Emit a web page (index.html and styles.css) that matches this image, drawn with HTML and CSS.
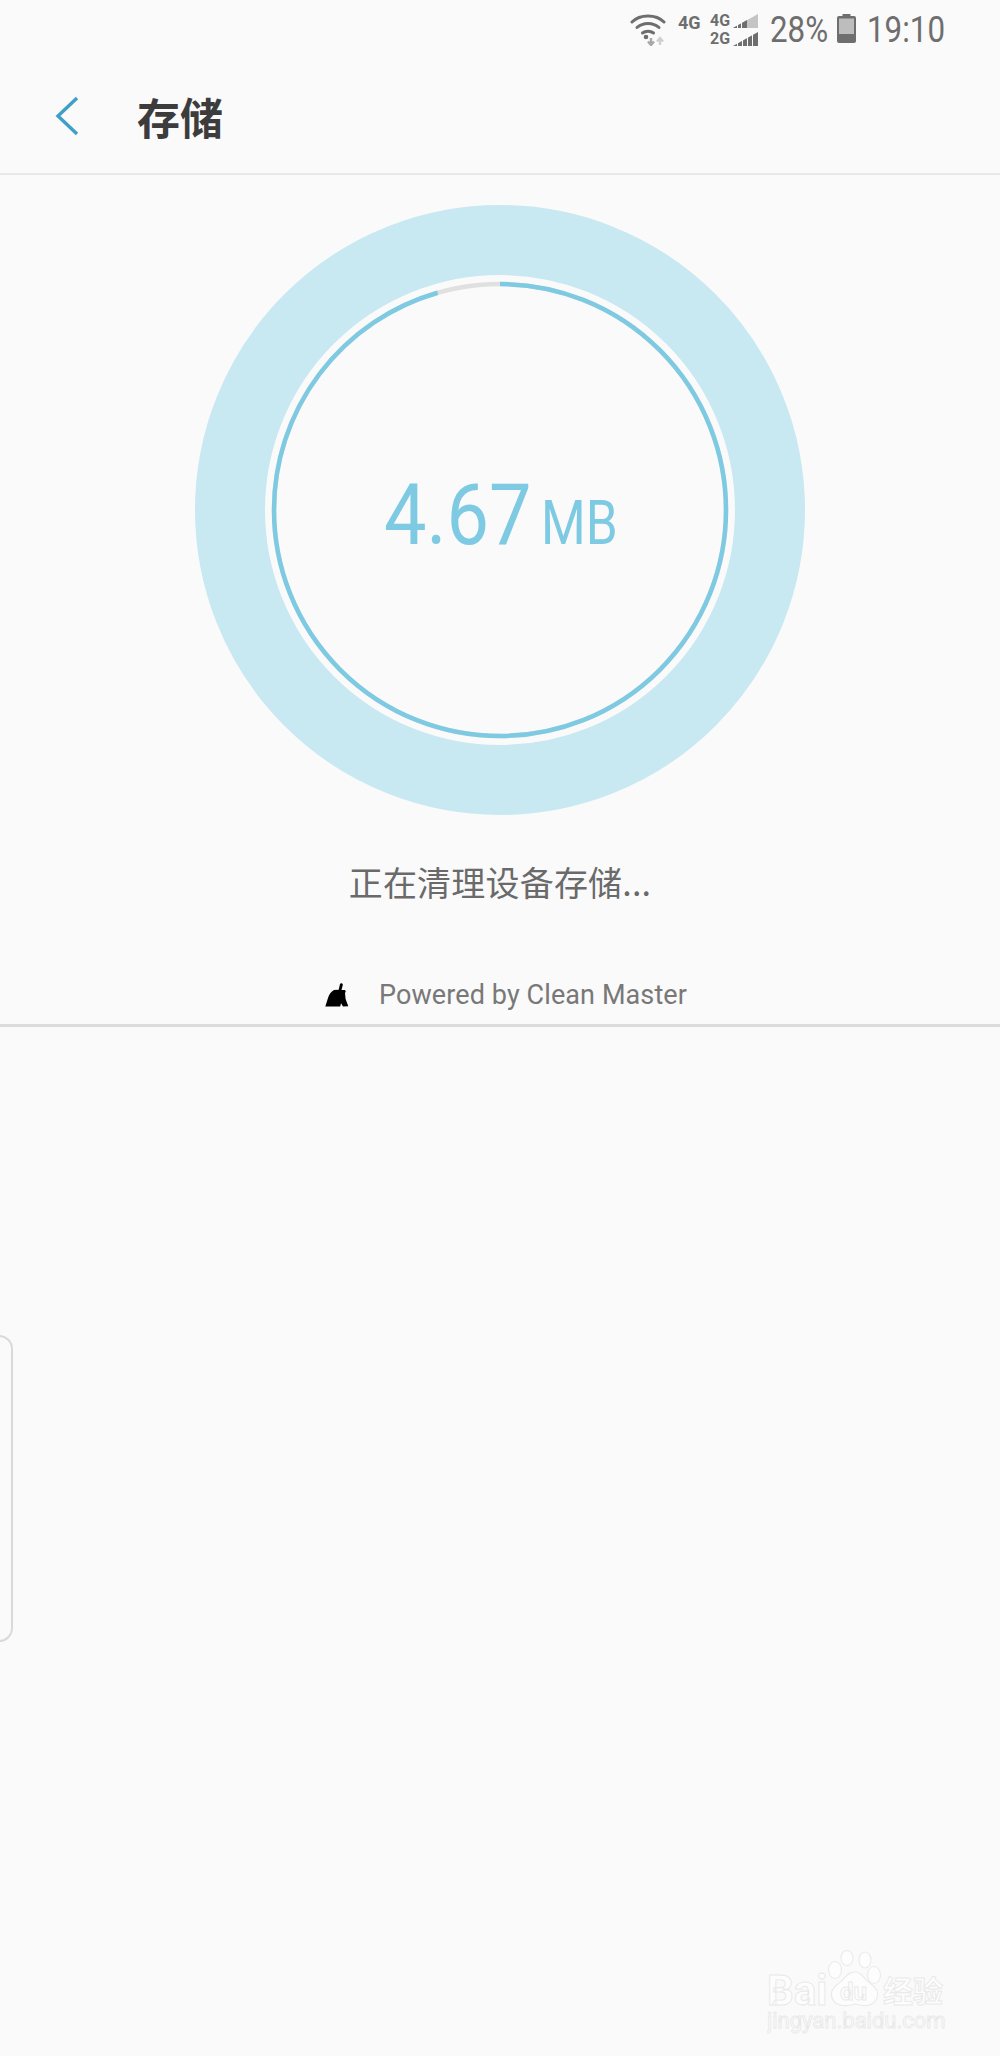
FILE: index.html
```html
<!DOCTYPE html>
<html lang="zh">
<head>
<meta charset="utf-8">
<title>存储</title>
<link rel="stylesheet" href="styles.css">
</head>
<body>
<div class="page">
  <div class="status">
    <svg class="wifi" viewBox="0 0 36 32" width="36" height="32">
      <g fill="none" stroke="#6e6e6e" stroke-width="3" stroke-linecap="round">
        <path d="M2 8 C10 0 26 0 34 8"/>
        <path d="M7 13.500 C13 8 23 8 29 13.500"/>
        <path d="M12.500 19 C15.500 16.500 20.500 16.500 23.500 19"/>
      </g>
      <circle cx="16" cy="23" r="2.300" fill="#6e6e6e"/>
      <path d="M21 24v6M18 27.500l3 3.500 3-3.500" fill="none" stroke="#a8a8a8" stroke-width="2.400"/>
      <path d="M30 31v-7M27 27.500l3-3.500 3 3.500" fill="none" stroke="#cfcfcf" stroke-width="2.400"/>
    </svg>
    <span class="net">4G</span>
    <span class="sim">
      <span class="sim-row"><span class="sim-label">4G</span>
        <svg viewBox="0 0 25 14" width="25" height="14"><path d="M0 14 25 0v14z" fill="#c4c4c4"/><path d="M0 14l14-8v8z" fill="#6e6e6e"/><path d="M4 0h1v14H4zM8 0h1v14H8z" fill="#fafafa"/></svg>
      </span>
      <span class="sim-row"><span class="sim-label">2G</span>
        <svg viewBox="0 0 25 14" width="25" height="14"><path d="M0 14 25 0v14z" fill="#6e6e6e"/><path d="M4 0h1v14H4zM9 0h1v14H9zM14 0h1v14h-1zM19 0h1v14h-1z" fill="#fafafa"/></svg>
      </span>
    </span>
    <span class="pct"><span class="squeeze">28%</span></span>
    <svg class="batt" viewBox="0 0 19 29" width="19" height="29">
      <path d="M5.500 0h8v2h3.500a2 2 0 0 1 2 2v23a2 2 0 0 1-2 2H2a2 2 0 0 1-2-2V4a2 2 0 0 1 2-2h3.500z" fill="#6e6e6e"/>
      <rect x="2" y="4.500" width="15" height="15.500" fill="#bdbdbd"/>
    </svg>
    <span class="time"><span class="squeeze">19:10</span></span>
  </div>

  <header class="bar">
    <svg class="back" viewBox="0 0 24 40" width="24" height="40">
      <path d="M22 2 3 20l19 18" fill="none" stroke="#3f9fc5" stroke-width="3.400"/>
    </svg>
    <h1 class="title">存储</h1>
  </header>

  <section class="clean">
    <div class="dial">
      <svg class="dial-art" viewBox="0 0 610 610" width="610" height="610">
        <circle cx="305" cy="305" r="270" fill="none" stroke="#c8e8f2" stroke-width="70"/>
        <circle cx="305" cy="305" r="226" fill="none" stroke="#e0e0e0" stroke-width="4.500"/>
        <circle class="dial-arc" cx="305" cy="305" r="226" fill="none" stroke="#7ecae3" stroke-width="4.500" pathLength="360" stroke-dasharray="344 16"/>
      </svg>
      <div class="reading">
        <span class="value">4.67</span>
        <span class="unit">MB</span>
      </div>
    </div>
    <p class="state">正在清理设备存储...</p>
    <div class="powered">
      <svg class="broom" viewBox="0 0 24 24" width="24" height="24">
        <path d="M15 1c.8-1.200 3-.6 2.800 1L16.500 7h3.500l.8 1.500-.8 1.500 .6 6 2.700 7.200-5.300.4-2-3.300-.8 3.300H0.300L3 15c1-3.500 3-6.500 6-8l4.700-.3z" fill="#000"/>
      </svg>
      <span class="powered-text">Powered by Clean Master</span>
    </div>
  </section>

  <div class="edge-handle"></div>

  <svg class="watermark" viewBox="0 0 190 90" width="190" height="90">
    <g fill="#fdfdfd" stroke="#ebebeb" stroke-width="1.200">
      <ellipse cx="68" cy="20" rx="6.500" ry="8.500"/>
      <ellipse cx="80" cy="8" rx="6" ry="7.500"/>
      <ellipse cx="98" cy="10" rx="6" ry="8"/>
      <ellipse cx="107" cy="25" rx="6.500" ry="8.500"/>
      <path d="M88 22c7 0 9 7 15 11 7 5 9 10 7 15-3 8-12 9-22 6-11 3-20 2-23-6-2-5 0-10 7-15 6-4 8-11 16-11z"/>
    </g>
    <g class="wm-text">
      <text x="0" y="55" class="wm-big">Bai</text>
      <text x="73" y="50" class="wm-du">du</text>
      <text x="116" y="52" class="wm-cn">经验</text>
      <text x="0" y="78" class="wm-url">jingyan.baidu.com</text>
    </g>
  </svg>
</div>
</body>
</html>
```
FILE: styles.css
```css
* { box-sizing: border-box; }
html, body { margin: 0; padding: 0; }
body {
  background: #fafafa;
  font-family: Roboto, "Noto Sans CJK SC", sans-serif;
}
.page {
  position: relative;
  width: 1000px;
  height: 2056px;
  overflow: hidden;
  background: #fafafa;
}

/* status bar */
.status {
  height: 60px;
  padding: 12px 55px 0 0;
  display: flex;
  justify-content: flex-end;
  align-items: flex-start;
  color: #6e6e6e;
}
.wifi { margin-top: 2px; }
.net {
  width: 24px;
  margin: 1px 8px 0 12px;
  font: bold 18px/20px Roboto, sans-serif;
  color: #6e6e6e;
}
.sim { display: flex; flex-direction: column; gap: 3px; width: 48px; margin-top: 1px; }
.sim-row { display: flex; align-items: flex-end; height: 15px; }
.sim-label {
  width: 23px;
  font: bold 16px/15px Roboto, sans-serif;
  color: #6e6e6e;
}
.pct { width: 57px; margin-left: 12px; font: 36px/36px Roboto, sans-serif; }
.time { width: 78px; margin-left: 11px; font: 36px/36px Roboto, sans-serif; }
.squeeze { display: inline-block; transform-origin: 0 50%; transform: scaleX(.87); white-space: nowrap; }
.batt { margin: 2px 0 0 10px; }

/* header */
.bar {
  height: 115px;
  display: flex;
  align-items: center;
  padding-bottom: 2px;
  border-bottom: 2px solid #e8e8e8;
}
.back { margin-left: 55px; }
.title {
  margin: 0 0 0 58px;
  font: bold 43px/56px "Noto Sans CJK SC", sans-serif;
  color: #3c3c3c;
}

/* cleaning panel */
.clean {
  height: 852px;
  padding-top: 30px;
  display: flex;
  flex-direction: column;
  align-items: center;
  border-bottom: 3px solid #dcdcdc;
}
.dial { display: grid; width: 610px; height: 610px; place-items: center; }
.dial > * { grid-area: 1 / 1; }
.dial-arc { transform: rotate(-90deg); transform-origin: 305px 305px; }
.reading {
  display: flex;
  align-items: baseline;
  justify-content: center;
  color: #7ecae3;
  margin-top: 18px;
  width: 240px;
}
.value {
  display: inline-block;
  font: 400 86px/100px Roboto, sans-serif;
  width: 143px;
  margin-left: -6px;
  transform-origin: 0 50%;
  transform: scaleX(.88);
  white-space: nowrap;
}
.unit {
  display: inline-block;
  width: 69px;
  margin-left: 14px;
  font: 400 61px/100px Roboto, sans-serif;
  transform-origin: 0 50%;
  transform: scaleX(.84);
  white-space: nowrap;
}
.state {
  margin: 43px 0 0;
  font: 34px/48px "Noto Sans CJK SC", sans-serif;
  letter-spacing: .2px;
  color: #6a6a6a;
}
.powered {
  margin: 71px 0 0 12px;
  display: flex;
  align-items: center;
  gap: 30px;
  height: 36px;
}
.broom { display: block; }
.powered-text { font: 27px/36px Roboto, sans-serif; letter-spacing: .1px; color: #787878; }

/* overlays */
.edge-handle {
  position: absolute;
  left: -20px;
  top: 1335px;
  width: 33px;
  height: 307px;
  border: 2px solid #d9d9d9;
  border-radius: 14px;
}
.watermark { position: absolute; left: 767px; top: 1950px; }
.wm-text text { fill: #fdfdfd; stroke: #e9e9e9; stroke-width: .9px; }
.wm-big { font: bold 42px Roboto, sans-serif; }
.wm-du { font: bold 24px Roboto, sans-serif; }
.wm-cn { font: bold 30px "Noto Sans CJK SC", sans-serif; }
.wm-url { font: 22px Roboto, sans-serif; }
```
